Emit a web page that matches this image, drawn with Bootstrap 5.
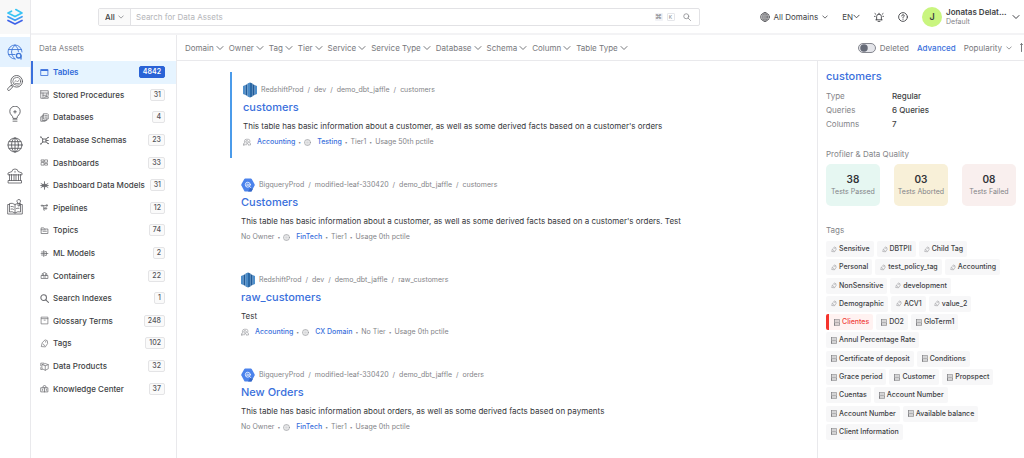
<!DOCTYPE html>
<html lang="en">
<head>
<meta charset="utf-8">
<meta name="viewport" content="width=device-width, initial-scale=1">
<title>Explore - Data Assets</title>
<link rel="stylesheet" href="https://cdn.jsdelivr.net/npm/bootstrap@5.3.0/dist/css/bootstrap.min.css">
<style>
  :root { --ink:#3e3f44; --soft:#838488; --blue:#3a70dc; --line:#e9e9ec; }
  body { font-family:Inter,"Open Sans",sans-serif; font-size:8px; line-height:12px; color:var(--ink); background:#fff; overflow-x:hidden; }
  svg { display:block; flex:none; fill:none; stroke:currentColor; stroke-linecap:round; stroke-linejoin:round; }
  a { color:var(--blue); text-decoration:none; }
  button, .pick { border:0; background:none; padding:0; color:inherit; font:inherit; line-height:12px; }
  .soft { color:var(--soft); }
  .i7 { width:7px; height:7px; } .i8 { width:8px; height:8px; } .i10 { width:10px; height:10px; } .i16 { width:16px; height:16px; } .i6 { width:6px; height:6px; }

  /* icon rail */
  .rail { width:31px; border-right:1px solid var(--line); color:#5a5b60; }
  .rail-links { display:grid; row-gap:1px; }
  .brand-cell { height:34px; background:#f8f8f8; margin-bottom:3px; }
  .rail-link { height:30px; color:inherit; }
  .rail-link.active { background:#e4f2ff; color:#4178d8; }

  /* top bar */
  .topbar { height:35px; border-bottom:2px solid #f3f3f5; padding-left:67px; padding-right:4px; }
  .finder { height:18px; border:1px solid #e2e2e5; border-radius:2px; margin-right:60px; }
  .scope { width:32px; background:#fafafa; border-right:1px solid #e2e2e5; padding:0 6px; }
  .pick { appearance:none; outline:0; }
  .finder input { border:0; outline:0; padding:0 5px; font:inherit; color:var(--ink); }
  .finder input::placeholder { color:#b4b5b9; }
  .key { min-width:8px; height:8px; border-radius:1px; background:#f1f2f6; font-size:7px; line-height:8px; text-align:center; }
  .key-k { border:1px solid #e5e6ea; background:#fff; font-size:5px; line-height:6px; }
  .tools { column-gap:14px; }
  .avatar { width:20px; height:20px; background:#c9f57f; font-size:9px; font-weight:600; }
  .who { width:62px; line-height:10px; }
  .who small { font-size:7px; }

  /* asset type list */
  .kinds { width:146px; border-right:1px solid var(--line); }
  .kinds-title { height:26px; padding-left:8px; }
  .kind-list { display:grid; grid-template-rows:repeat(15,1fr); height:339px; margin:0; padding:0; list-style:none; }
  .kind { height:100%; border-left:2px solid transparent; padding:0 11px 0 7px; color:var(--ink); font-weight:500; column-gap:4px; white-space:nowrap; }
  .kind svg { color:#6b6c70; width:9px; height:9px; }
  .kind.active { background:#e6f4ff; border-color:#3a70dc; color:#2f69d9; font-weight:600; }
  .kind.active svg { color:#3a70dc; }
  .tally { font-size:7px; line-height:10px; padding:0 3px; border:1px solid #e4e4e6; border-radius:2px; background:#fafafa; color:#55565a; }
  .kind.active .tally { background:#2a63d6; border-color:#2a63d6; color:#fff; }

  /* filters */
  .filters { height:26px; border-bottom:1px solid var(--line); padding-left:8px; color:#77787c; white-space:nowrap; overflow:hidden; }
  .filter-set { column-gap:5px; }
  .filter-set button { display:flex; align-items:center; column-gap:2px; }
  .filters .form-check-input { width:18px; height:10px; margin:0; float:none; border:1px solid #85878f; background-color:#e4e5ea; background-size:10px 10px; box-shadow:none;
    background-image:url("data:image/svg+xml,%3csvg xmlns='http://www.w3.org/2000/svg' viewBox='-4 -4 8 8'%3e%3ccircle r='3' fill='%23666b78'/%3e%3c/svg%3e"); }
  .sorter { width:4px; overflow:hidden; }

  /* results */
  .pane { min-width:0; }
  .results { padding:11px 16px 11px 53px; row-gap:9px; }
  .hit { padding:10px 11px 8px; }
  .hit.chosen { border-left:2px solid #4b9bea; }
  .crumbs { height:16px; font-size:7px; column-gap:4px; color:var(--soft); }
  .hit h2 { font-size:11px; line-height:18px; font-weight:500; margin:0 0 2px; }
  .hit p { line-height:16px; margin:0; color:#36373b; }
  .facts { font-size:7px; height:16px; column-gap:3px; color:var(--soft); }
  .facts a { font-weight:500; margin-left:3px; }
  .facts svg { color:#96979c; stroke-width:.9; }
  .dot { font-size:5px; }

  /* summary */
  .summary { width:207px; border-left:1px solid var(--line); padding:6px 8px 16px; }
  .summary h2 { font-size:11px; line-height:18px; font-weight:500; margin:0 0 4px; }
  .props { display:grid; grid-template-columns:66px 1fr; line-height:14px; margin:0 0 17px; }
  .props dt { font-weight:400; color:var(--soft); }
  .props dd { font-weight:500; margin:0; }
  .summary h3 { font-size:8px; line-height:12px; font-weight:400; color:var(--soft); margin:0; }
  .scores { display:grid; grid-template-columns:repeat(3,1fr); column-gap:14px; margin:4px 0 18px; }
  .score { height:42px; border-radius:5px; font-size:7px; line-height:11px; color:var(--soft); }
  .score b { font-size:10px; line-height:13px; font-weight:600; color:#333438; }
  .pass { background:#e6f7f2; } .abort { background:#f8f0d8; } .fail { background:#f9efee; }
  .chips { gap:2px 3px; margin-top:5px; padding-right:12px; min-height:199px; align-content:space-between; }
  .chip { height:16px; padding:0 4px 0 5px; column-gap:2px; border-radius:2px; background:#f7f7f8; color:var(--ink); font-size:7px; font-weight:500; }
  .chip svg { color:#66676b; width:6px; height:7px; }
  .chip.hot { background:#fff2f1; border-left:3px solid #f5332c; color:#f0433d; }
</style>
</head>
<body>
<svg width="0" height="0" class="position-absolute" aria-hidden="true">
  <symbol id="chev" viewBox="0 0 8 8"><path d="M1 2.500 4 5.500 7 2.500"/></symbol>
  <symbol id="globe" viewBox="0 0 16 16"><circle cx="8" cy="8" r="7"/><ellipse cx="8" cy="8" rx="3.400" ry="7"/><path d="M8 1v14M1 8h14M2 4.700h12M2 11.300h12"/></symbol>
  <symbol id="ring" viewBox="0 0 16 16"><circle cx="8" cy="8" r="7" stroke-width="1.400"/><path stroke-width=".5" d="M8 1v14M1 8h14M3.500 4.500h9M3.500 11.500h9M5 2.500v11M11 2.500v11"/></symbol>
  <symbol id="find" viewBox="0 0 16 16"><circle cx="6.500" cy="6.500" r="5"/><path d="m10.300 10.300 4.700 4.700"/></symbol>
  <symbol id="team" viewBox="0 0 16 14"><path stroke-width="1.300" d="M1 13v-2q0-2 2.500-2.500Q2.500 7 3 4.500 3.500 1.500 6.500 1.500h4q3 0 3.200 3 .3 2.500-.7 4 2 .5 2 2.500v2h-3M1 13h3v-2M6 5q2-2 4 0t0 4q-2 1-3.500-.5T6 5M6 13q0-3 2.500-3t2.500 3"/></symbol>
  <symbol id="tag" viewBox="0 0 16 16"><path d="M4.500 6 9 1.500l4 1.500.5 5-4 6L3 13.500zM10 4.500v1M6 9l2 3"/></symbol>
  <symbol id="term" viewBox="0 0 12 14"><path d="M1 1h10v9H1zM1 10v3h10v-3M3 4h6M3 7h6M1 1v12"/></symbol>
  <symbol id="redshift" viewBox="0 0 14 16"><g stroke="none"><path fill="#4f8fcb" d="M0 4 2.500 3v10L0 12zM14 4l-2.500-1v10l2.500-1z"/><path fill="#205b99" d="M2.500 3 4.500 2v12l-2-1zM11.500 3l-2-1v12l2-1z"/><path fill="#4b8bc7" d="M4.500 1.500 7 .5v15l-2.500-1z"/><path fill="#2b69a6" d="M7 .5l2.500 1v13L7 15.500z"/></g></symbol>
  <symbol id="bigquery" viewBox="0 0 14 14"><path fill="#4c83ec" stroke="none" d="M4.200.5h5.600q.6 0 .9.500l2.900 5.200q.3.800 0 1.400l-2.900 5.400q-.3.500-.9.500H4.200q-.6 0-.9-.5L.4 7.600q-.3-.7 0-1.400L3.300 1q.3-.5.9-.5"/><path fill="#3668c6" stroke="none" d="m9.500 9.300 2.300 1.700-1.300 2.400H7z"/><circle cx="6.800" cy="6.700" r="2.500" stroke="#fff" stroke-width=".8"/><path stroke="#fff" stroke-width=".7" d="M5.800 6.700v.7M6.800 5.800v1.800M7.800 6.500v.9M8.800 8.700l1.200 1.200"/></symbol>
</svg>

<div class="d-flex min-vh-100">
  <nav class="rail d-flex flex-column flex-shrink-0" aria-label="Main">
    <a href="#" class="brand-cell d-flex align-items-center justify-content-center" aria-label="Home">
      <svg width="18" height="18" viewBox="0 0 18 18" stroke-width="1.700"><path stroke="#38c5f4" d="M5.500 3.200 2 5l7 3.600L16 5 9.800 1.600"/><path stroke="#3d9df5" d="m2 8.700 7 3.600 7-3.600"/><path stroke="#3f63e8" d="m2 12.400 7 3.600 7-3.600"/></svg>
    </a>
    <div class="rail-links">
      <a href="#" class="rail-link active d-flex align-items-center justify-content-center" aria-label="Explore"><svg class="i16" viewBox="0 0 16 16" stroke-width=".9"><path d="M8 15A7 7 0 1 1 15 8M8 1Q4.500 4 4.500 8t3.500 7M8 1q3.500 3 3.500 6.500M1.500 5.500h13M1.500 10.500H8"/><circle cx="11.700" cy="11.700" r="2.300" stroke-width="1.300"/><path stroke-width="1.300" d="M14 11.700V15"/></svg></a>
      <a href="#" class="rail-link d-flex align-items-center justify-content-center" aria-label="Observability"><svg class="i16" viewBox="0 0 16 16" stroke-width=".9"><circle cx="9.700" cy="6.300" r="5.800"/><circle cx="9.700" cy="6.300" r="3.900" stroke-width=".7"/><path stroke-width=".6" d="M7.500 7 9 5.500l1.500 1.500 1.500-2M8 8.500h3.500"/><path d="M5 10l-1 1M3.700 10.500.7 13.800q-.3 1 .3 1.500t1.500 0l3-3.200z"/></svg></a>
      <a href="#" class="rail-link d-flex align-items-center justify-content-center" aria-label="Insights"><svg class="i16" viewBox="0 0 16 16" stroke-width=".9"><path d="M6 12Q6 10.300 4.300 9A5.200 5.200 0 1 1 11.700 9Q10 10.300 10 12zM8 4.500v2.600M6.700 5.800h2.600"/><path stroke-width=".7" d="M6 13.700h4M6 15.300h4"/></svg></a>
      <a href="#" class="rail-link d-flex align-items-center justify-content-center" aria-label="Domains"><svg class="i16" stroke-width=".9"><use href="#globe"/></svg></a>
      <a href="#" class="rail-link d-flex align-items-center justify-content-center" aria-label="Govern"><svg class="i16" viewBox="0 0 16 16" stroke-width=".8"><path d="M1 6.500V5l4-1.500Q5 1 8 1t3 2.500L15 5v1.500zM2.500 6.500v6M4.500 6.500v6M7 6.500v6M9 6.500v6M11.500 6.500v6M13.500 6.500v6M1.500 12.500h13V15h-13zM8 3.300v1"/></svg></a>
      <a href="#" class="rail-link d-flex align-items-center justify-content-center" aria-label="Glossary"><svg class="i16" viewBox="0 0 16 16" stroke-width=".8"><path d="M8 5.500Q5 3.500 2.500 4.500v8.500Q5 12 8 14q3-2 5.500-1V4.500Q11 3.800 8 5.500V14M2.500 5.500H.7V15h14.600V5.500h-1.800M4 7.500q1.500-.3 2.500.3M4 10q1.500-.3 2.500.3M9.500 9.500q1.500-.6 2.500-.3M11 6.500V4q-1.500-1-1-2.300t2-1.200 1.500 1.500T12.500 4v2.500z"/></svg></a>
    </div>
  </nav>

  <div class="pane d-flex flex-column flex-grow-1">
    <header class="topbar d-flex align-items-center">
      <form class="finder d-flex flex-grow-1 align-items-stretch" role="search">
        <label class="scope d-flex align-items-center justify-content-between">
          <select class="pick fw-medium" aria-label="Search scope"><option>All</option></select>
          <svg class="i6 soft"><use href="#chev"/></svg>
        </label>
        <input type="search" class="flex-grow-1" placeholder="Search for Data Assets" aria-label="Search for Data Assets">
        <span class="d-flex align-items-center gap-1 pe-2 soft me-n1"><span class="key">⌘</span><span class="key key-k">K</span><svg class="i8 ms-1" stroke-width="1.500"><use href="#find"/></svg></span>
      </form>
      <div class="tools d-flex align-items-center">
        <button class="d-flex align-items-center gap-1"><svg class="i10" stroke-width="1"><use href="#globe"/></svg><span>All Domains</span><svg class="i6"><use href="#chev"/></svg></button>
        <button class="d-flex align-items-center"><span>EN</span><svg class="i7"><use href="#chev"/></svg></button>
        <button aria-label="Notifications"><svg class="i10" viewBox="0 0 16 16" stroke-width="1.400"><path d="M3 12.500h10M4.200 12.500V7.200q0-3.700 3.800-3.700t3.800 3.700v5.300M8 3.500V2M6.500 15h3M1.500 2.500l1.300 1M14.500 2.500l-1.300 1M.8 7h1M14.200 7h1"/></svg></button>
        <button aria-label="Help"><svg class="i10" viewBox="0 0 16 16" stroke-width="1.400"><circle cx="8" cy="8" r="7"/><path d="M6 6.300q0-2 2-2t2 1.800q0 1-1.200 1.600T8 9.500M8 11.600v.2"/></svg></button>
        <button class="d-flex align-items-center gap-1 text-start">
          <span class="avatar rounded-circle d-flex align-items-center justify-content-center">J</span>
          <span class="who"><span class="d-block fw-semibold text-nowrap">Jonatas Delat...</span><small class="d-block soft">Default</small></span>
          <svg class="i8"><use href="#chev"/></svg>
        </button>
      </div>
    </header>

    <div class="d-flex flex-grow-1">
      <aside class="kinds flex-shrink-0">
        <div class="kinds-title soft d-flex align-items-center">Data Assets</div>
        <ul class="kind-list">
          <li><a href="#" class="kind active d-flex align-items-center"><svg viewBox="0 0 12 12" stroke-width="1.100"><path d="M1.500 2h9v8h-9z"/><path stroke-width="2" d="M2 3h8"/></svg>Tables<span class="tally ms-auto">4842</span></a></li>
          <li><a href="#" class="kind d-flex align-items-center"><svg viewBox="0 0 12 12"><path d="M1 1h10v6M1 1v10h5M1 4h10M4 4v7M4 7h4M7 9h4v2H7zM9 5v4"/></svg>Stored Procedures<span class="tally ms-auto">31</span></a></li>
          <li><a href="#" class="kind d-flex align-items-center"><svg viewBox="0 0 12 12"><path d="M5 1h5l1 1v6H5zM5 3H3v7h6V8M3 5H1v6h6v-1M6.500 3.500h3M6.500 5.500h3"/></svg>Databases<span class="tally ms-auto">4</span></a></li>
          <li><a href="#" class="kind d-flex align-items-center"><svg viewBox="0 0 12 12" stroke-width="1.300"><path d="M1 1.500 4 4M1 10.500 4 8M11 2 8 4M11 10 8 8M4 4h4v4H4zM.8 1.500h1M10.300 2h1M.8 10.500h1M10.300 10h1M8 6h3"/></svg>Database Schemas<span class="tally ms-auto">23</span></a></li>
          <li><a href="#" class="kind d-flex align-items-center"><svg viewBox="0 0 12 12" stroke-width=".9"><path d="M2 2.500h3.300v2H2zM6.700 2.500H10v3.200H6.700zM2 6h3.300v3.500H2zM6.700 7.300H10v2.200H6.700z"/></svg>Dashboards<span class="tally ms-auto">33</span></a></li>
          <li><a href="#" class="kind d-flex align-items-center"><svg viewBox="0 0 12 12" stroke-width="1.200"><path d="M6 1v10M1.500 3.500l9 5M10.500 3.500l-9 5M1 6h10M4 4.500h4v3H4z"/></svg>Dashboard Data Models<span class="tally ms-auto">31</span></a></li>
          <li><a href="#" class="kind d-flex align-items-center"><svg viewBox="0 0 12 12"><path d="M2 3h2v1H2zM8.500 2.500h1.500v1.500H8.500zM4 3.500h4.500M5 3.500V7h2M7 6.500h2V8H7zM5 7v2.500h1"/></svg>Pipelines<span class="tally ms-auto">12</span></a></li>
          <li><a href="#" class="kind d-flex align-items-center"><svg viewBox="0 0 12 12"><path d="M1.500 9.500v-7H5l1 1.500h4.500v5.500zM1.500 5H7M4 7h4.500"/></svg>Topics<span class="tally ms-auto">74</span></a></li>
          <li><a href="#" class="kind d-flex align-items-center"><svg viewBox="0 0 12 12"><path d="M5 2v8M2 4h4M2 8h4M1.500 6h9M7 3.500h1.500V6M7 8.500h1.500V6"/></svg>ML Models<span class="tally ms-auto">2</span></a></li>
          <li><a href="#" class="kind d-flex align-items-center"><svg viewBox="0 0 12 12"><path d="M2 6h8.500v4H2zM3 6V3.500L6 2l3 1.500V6M4.500 4v2M7.500 4v2M4.500 8h3"/></svg>Containers<span class="tally ms-auto">22</span></a></li>
          <li><a href="#" class="kind d-flex align-items-center"><svg stroke-width="1.800"><use href="#find"/></svg>Search Indexes<span class="tally ms-auto">1</span></a></li>
          <li><a href="#" class="kind d-flex align-items-center"><svg viewBox="0 0 12 12" stroke-width=".9"><path d="M2 1.500h8.500v9H2zM2 3.500h8.500M5.500 5.500H7"/></svg>Glossary Terms<span class="tally ms-auto">248</span></a></li>
          <li><a href="#" class="kind d-flex align-items-center"><svg stroke-width="1.200"><use href="#tag"/></svg>Tags<span class="tally ms-auto">102</span></a></li>
          <li><a href="#" class="kind d-flex align-items-center"><svg viewBox="0 0 12 12" stroke-width=".9"><path d="M3 3.500 7 2l4 1.500v5.500l-4 2-4-2zM3 3.500 7 5l4-1.500M7 5v6M1 5V1.500h4M1 7.500V10h2"/></svg>Data Products<span class="tally ms-auto">32</span></a></li>
          <li><a href="#" class="kind d-flex align-items-center"><svg viewBox="0 0 12 12"><path d="M1.500 5h9v5.500h-9zM4 5V3l2-1 2 1v2M6 5v5.500M3.500 7v1.500M8.500 7v1.500"/></svg>Knowledge Center<span class="tally ms-auto">37</span></a></li>
        </ul>
      </aside>

      <div class="pane d-flex flex-column flex-grow-1">
        <div class="filters d-flex align-items-center justify-content-between">
          <div class="filter-set d-flex">
            <button>Domain<svg class="i8"><use href="#chev"/></svg></button>
            <button>Owner<svg class="i8"><use href="#chev"/></svg></button>
            <button>Tag<svg class="i8"><use href="#chev"/></svg></button>
            <button>Tier<svg class="i8"><use href="#chev"/></svg></button>
            <button>Service<svg class="i8"><use href="#chev"/></svg></button>
            <button>Service Type<svg class="i8"><use href="#chev"/></svg></button>
            <button>Database<svg class="i8"><use href="#chev"/></svg></button>
            <button>Schema<svg class="i8"><use href="#chev"/></svg></button>
            <button>Column<svg class="i8"><use href="#chev"/></svg></button>
            <button>Table Type<svg class="i8"><use href="#chev"/></svg></button>
          </div>
          <div class="d-flex align-items-center gap-2">
            <div class="form-switch d-flex align-items-center gap-1 p-0"><input class="form-check-input" type="checkbox" role="switch" id="deleted"><label for="deleted">Deleted</label></div>
            <a href="#" class="fw-medium">Advanced</a>
            <button class="d-flex align-items-center gap-1">Popularity<svg class="i6"><use href="#chev"/></svg></button>
            <button class="sorter" aria-label="Sort order"><svg width="10" height="9" viewBox="0 0 10 9"><path d="M1.500 8.500v-8L.5 1.500M1.500.5l1 1M5 1h3L5 4h3M5 6h3M5 8.500h3"/></svg></button>
          </div>
        </div>

        <div class="d-flex flex-grow-1">
          <main class="results d-flex flex-column flex-grow-1">
            <article class="hit chosen">
              <div class="crumbs d-flex align-items-center"><svg width="14" height="16"><use href="#redshift"/></svg><span>RedshiftProd</span><span>/</span><span>dev</span><span>/</span><span>demo_dbt_jaffle</span><span>/</span><span>customers</span></div>
              <h2><a href="#">customers</a></h2>
              <p>This table has basic information about a customer, as well as some derived facts based on a customer's orders</p>
              <div class="facts d-flex align-items-center"><svg class="i8"><use href="#team"/></svg><a href="#">Accounting</a><span class="dot">•</span><svg class="i7"><use href="#ring"/></svg><a href="#">Testing</a><span class="dot">•</span><span>Tier1</span><span class="dot">•</span><span>Usage 50th pctile</span></div>
            </article>
            <article class="hit">
              <div class="crumbs d-flex align-items-center"><svg width="14" height="14"><use href="#bigquery"/></svg><span>BigqueryProd</span><span>/</span><span>modified-leaf-330420</span><span>/</span><span>demo_dbt_jaffle</span><span>/</span><span>customers</span></div>
              <h2><a href="#">Customers</a></h2>
              <p>This table has basic information about a customer, as well as some derived facts based on a customer's orders. Test</p>
              <div class="facts d-flex align-items-center"><span>No Owner</span><span class="dot">•</span><svg class="i7"><use href="#ring"/></svg><a href="#">FinTech</a><span class="dot">•</span><span>Tier1</span><span class="dot">•</span><span>Usage 0th pctile</span></div>
            </article>
            <article class="hit">
              <div class="crumbs d-flex align-items-center"><svg width="14" height="16"><use href="#redshift"/></svg><span>RedshiftProd</span><span>/</span><span>dev</span><span>/</span><span>demo_dbt_jaffle</span><span>/</span><span>raw_customers</span></div>
              <h2><a href="#">raw_customers</a></h2>
              <p>Test</p>
              <div class="facts d-flex align-items-center"><svg class="i8"><use href="#team"/></svg><a href="#">Accounting</a><span class="dot">•</span><svg class="i7"><use href="#ring"/></svg><a href="#">CX Domain</a><span class="dot">•</span><span>No Tier</span><span class="dot">•</span><span>Usage 0th pctile</span></div>
            </article>
            <article class="hit">
              <div class="crumbs d-flex align-items-center"><svg width="14" height="14"><use href="#bigquery"/></svg><span>BigqueryProd</span><span>/</span><span>modified-leaf-330420</span><span>/</span><span>demo_dbt_jaffle</span><span>/</span><span>orders</span></div>
              <h2><a href="#">New Orders</a></h2>
              <p>This table has basic information about orders, as well as some derived facts based on payments</p>
              <div class="facts d-flex align-items-center"><span>No Owner</span><span class="dot">•</span><svg class="i7"><use href="#ring"/></svg><a href="#">FinTech</a><span class="dot">•</span><span>Tier1</span><span class="dot">•</span><span>Usage 0th pctile</span></div>
            </article>
          </main>

          <aside class="summary flex-shrink-0">
            <h2><a href="#">customers</a></h2>
            <dl class="props"><dt>Type</dt><dd>Regular</dd><dt>Queries</dt><dd>6 Queries</dd><dt>Columns</dt><dd>7</dd></dl>
            <h3>Profiler &amp; Data Quality</h3>
            <div class="scores">
              <div class="score pass d-flex flex-column align-items-center justify-content-center"><b>38</b>Tests Passed</div>
              <div class="score abort d-flex flex-column align-items-center justify-content-center"><b>03</b>Tests Aborted</div>
              <div class="score fail d-flex flex-column align-items-center justify-content-center"><b>08</b>Tests Failed</div>
            </div>
            <h3>Tags</h3>
            <div class="chips d-flex flex-wrap">
              <a href="#" class="chip d-flex align-items-center"><svg><use href="#tag"/></svg>Sensitive</a>
              <a href="#" class="chip d-flex align-items-center"><svg><use href="#tag"/></svg>DBTPII</a>
              <a href="#" class="chip d-flex align-items-center"><svg><use href="#tag"/></svg>Child Tag</a>
              <a href="#" class="chip d-flex align-items-center"><svg><use href="#tag"/></svg>Personal</a>
              <a href="#" class="chip d-flex align-items-center"><svg><use href="#tag"/></svg>test_policy_tag</a>
              <a href="#" class="chip d-flex align-items-center"><svg><use href="#tag"/></svg>Accounting</a>
              <a href="#" class="chip d-flex align-items-center"><svg><use href="#tag"/></svg>NonSensitive</a>
              <a href="#" class="chip d-flex align-items-center"><svg><use href="#tag"/></svg>development</a>
              <a href="#" class="chip d-flex align-items-center"><svg><use href="#tag"/></svg>Demographic</a>
              <a href="#" class="chip d-flex align-items-center"><svg><use href="#tag"/></svg>ACV1</a>
              <a href="#" class="chip d-flex align-items-center"><svg><use href="#tag"/></svg>value_2</a>
              <a href="#" class="chip hot d-flex align-items-center"><svg><use href="#term"/></svg>Clientes</a>
              <a href="#" class="chip d-flex align-items-center"><svg><use href="#term"/></svg>DO2</a>
              <a href="#" class="chip d-flex align-items-center"><svg><use href="#term"/></svg>GloTerm1</a>
              <a href="#" class="chip d-flex align-items-center"><svg><use href="#term"/></svg>Annul Percentage Rate</a>
              <a href="#" class="chip d-flex align-items-center"><svg><use href="#term"/></svg>Certificate of deposit</a>
              <a href="#" class="chip d-flex align-items-center"><svg><use href="#term"/></svg>Conditions</a>
              <a href="#" class="chip d-flex align-items-center"><svg><use href="#term"/></svg>Grace period</a>
              <a href="#" class="chip d-flex align-items-center"><svg><use href="#term"/></svg>Customer</a>
              <a href="#" class="chip d-flex align-items-center"><svg><use href="#term"/></svg>Propspect</a>
              <a href="#" class="chip d-flex align-items-center"><svg><use href="#term"/></svg>Cuentas</a>
              <a href="#" class="chip d-flex align-items-center"><svg><use href="#term"/></svg>Account Number</a>
              <a href="#" class="chip d-flex align-items-center"><svg><use href="#term"/></svg>Account Number</a>
              <a href="#" class="chip d-flex align-items-center"><svg><use href="#term"/></svg>Available balance</a>
              <a href="#" class="chip d-flex align-items-center"><svg><use href="#term"/></svg>Client Information</a>
            </div>
          </aside>
        </div>
      </div>
    </div>
  </div>
</div>
<script src="https://cdn.jsdelivr.net/npm/bootstrap@5.3.0/dist/js/bootstrap.bundle.min.js"></script>
</body>
</html>
